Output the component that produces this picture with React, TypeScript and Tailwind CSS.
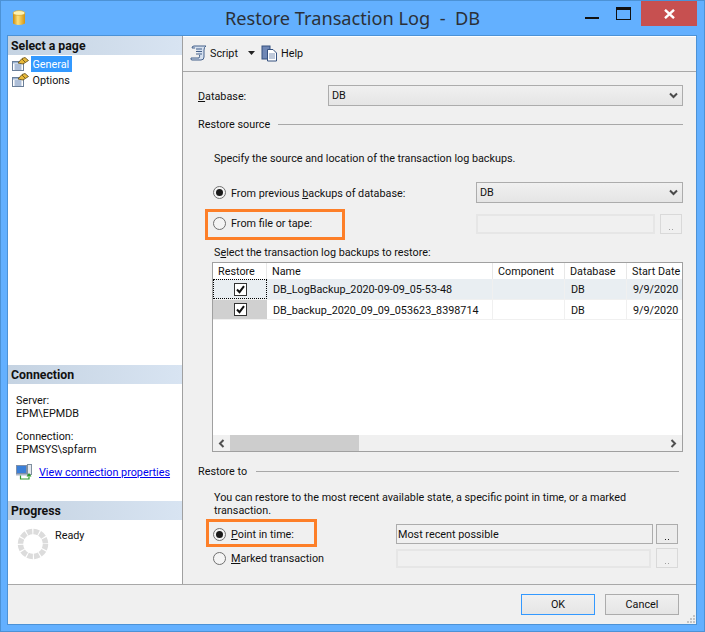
import React from "react";

function Radio({ on }: { on?: boolean }) {
  return (
    <span className="w-[13px] h-[13px] rounded-full border border-[#707070] bg-[#f4f4f4] flex items-center justify-center shrink-0">
      {on && <span className="w-[7px] h-[7px] rounded-full bg-[#1a1a1a]" />}
    </span>
  );
}

function Chevron() {
  return (
    <svg width="9" height="7" viewBox="0 0 9 7" className="shrink-0">
      <path d="M1 1.5 L4.5 5 L8 1.5" fill="none" stroke="#4a4a4a" strokeWidth="2" />
    </svg>
  );
}

function Select({ text, className }: { text: string; className: string }) {
  return (
    <div className={`h-[21px] border border-[#acacac] bg-gradient-to-b from-[#f0f0f0] to-[#e5e5e5] flex items-center justify-between pl-[3px] pr-[4px] shrink-0 ${className}`}>
      <span>{text}</span>
      <Chevron />
    </div>
  );
}

function Dots({ off }: { off?: boolean }) {
  return (
    <div className={`w-[22px] h-[20px] border flex items-end justify-center pb-[3px] gap-[2px] shrink-0 ${off ? "border-[#d9d9d9]" : "border-[#acacac] bg-[#ececec]"}`}>
      <span className={`w-[1px] h-[1px] ${off ? "bg-[#a0a0a0]" : "bg-[#222]"}`} />
      <span className={`w-[1px] h-[1px] ${off ? "bg-[#a0a0a0]" : "bg-[#222]"}`} />
    </div>
  );
}

function PageIcon() {
  return (
    <svg width="17" height="14" viewBox="0 0 17 14" className="shrink-0">
      <rect x="0.5" y="4.5" width="11" height="9" fill="#fff" stroke="#6b7f99" />
      <rect x="1" y="5" width="10" height="1.5" fill="#9db4d2" />
      <path d="M2.5 8h7M2.5 10h7M2.5 12h7" stroke="#5d7fb0" strokeWidth="1" />
      <path d="M6 6 L10 1.5 L13 0.5 L16.5 3.5 L11 7 Z" fill="#e8b93a" stroke="#5d4a1a" strokeWidth="0.8" />
      <path d="M10 2 L13 5" stroke="#5d4a1a" strokeWidth="0.8" />
    </svg>
  );
}

function PanelHead({ children }: { children: React.ReactNode }) {
  return (
    <div className="h-[19px] pl-[3px] pt-[1px] flex items-center font-bold text-[12.3px] bg-gradient-to-r from-[#c5d3e2] to-[#d8e4f2] text-[#111]">
      {children}
    </div>
  );
}

function Check({ bg, dotted }: { bg: string; dotted?: boolean }) {
  return (
    <div className={`w-[54px] h-full flex items-center justify-center shrink-0 ${bg} ${dotted ? "border border-dotted border-black" : ""}`}>
      <span className="w-[13px] h-[13px] border border-[#333] bg-white flex items-center justify-center">
        <svg width="9" height="9" viewBox="0 0 9 9">
          <path d="M1 4.5 L3.5 7.2 L8 1.2" fill="none" stroke="#111" strokeWidth="2" />
        </svg>
      </span>
    </div>
  );
}

function Row({ name, first }: { name: string; first?: boolean }) {
  const bg = first ? "bg-[#e9eef2] h-[21px]" : "bg-white h-[20px]";
  return (
    <div className={`flex border-b border-[#f0f0f0] shrink-0 ${bg}`}>
      <Check bg={first ? "bg-[#e9eef2]" : "bg-[#d0d0d0]"} dotted={first} />
      <div className="w-[226px] pl-[6px] pt-[1px] flex items-center border-r border-[#f0f0f0] shrink-0 whitespace-nowrap">{name}</div>
      <div className="w-[72px] border-r border-[#f0f0f0] shrink-0" />
      <div className="w-[62px] pl-[6px] pt-[1px] flex items-center border-r border-[#f0f0f0] shrink-0">DB</div>
      <div className="pl-[6px] pt-[1px] flex items-center whitespace-nowrap">9/9/2020</div>
    </div>
  );
}

function HeadCell({ w, children }: { w: string; children: React.ReactNode }) {
  return <div className={`${w} pl-[5px] flex items-center border-r border-[#e8e8e8] shrink-0`}>{children}</div>;
}

export default function App() {
  return (
    <div className="w-[705px] h-[632px] bg-[#63b0ff] border border-[#4c92d6] flex flex-col font-['Roboto',sans-serif] text-[10.8px] leading-[13px] text-[#111] overflow-hidden">
      {/* title bar */}
      <div className="h-[34px] relative flex items-center justify-center shrink-0">
        <svg width="14" height="16" viewBox="0 0 14 16" className="absolute left-[11px] top-[9px]">
          <defs>
            <linearGradient id="g" x1="0" x2="1" y1="0" y2="0">
              <stop offset="0" stopColor="#c98a10" />
              <stop offset="0.4" stopColor="#ffe27a" />
              <stop offset="1" stopColor="#d49412" />
            </linearGradient>
          </defs>
          <path d="M1 3 V13.5 Q7 16.5 13 13.5 V3 Z" fill="url(#g)" />
          <ellipse cx="7" cy="3" rx="6" ry="2.4" fill="#fff2b0" stroke="#d09a1c" strokeWidth="0.6" />
        </svg>
        <span className="font-['Noto_Sans',sans-serif] text-[18.2px] text-[#2b3038] whitespace-pre leading-[24px] -mt-[1px]">Restore Transaction Log  -  DB</span>
        <div className="absolute right-[105px] top-[16px] w-[14px] h-[2px] bg-[#111]" />
        <div className="absolute right-[73px] top-[6px] w-[15px] h-[13px] border border-[#111] border-t-[3px]" />
        <div className="absolute right-[7px] top-0 w-[56px] h-[25px] bg-[#c75050] flex items-center justify-center">
          <svg width="11" height="10" viewBox="0 0 11 10">
            <path d="M1 0.8 L10 9.2 M10 0.8 L1 9.2" stroke="#fff" strokeWidth="2.4" />
          </svg>
        </div>
      </div>

      {/* client */}
      <div className="ml-[6px] mr-[7px] w-[690px] h-[590px] border border-[#4c92d6] bg-[#f0f0f0] flex flex-col shrink-0">
        <div className="flex h-[549px] border-b border-[#a8a8a8] shrink-0">
          {/* left */}
          <div className="w-[175px] bg-white border-r border-[#a0a0a0] flex flex-col shrink-0">
            <PanelHead>Select a page</PanelHead>
            <div className="flex items-center h-[16px] mt-[1px] pl-[4px]">
              <PageIcon />
              <span className="ml-[2px] h-[16px] w-[41px] pl-[1.5px] pt-[1px] bg-[#3399ff] text-white flex items-center">General</span>
            </div>
            <div className="flex items-center h-[16px] pl-[4px]">
              <PageIcon />
              <span className="ml-[2px] pl-[1.5px] pt-[1px]">Options</span>
            </div>
            <div className="flex-1" />
            <PanelHead>Connection</PanelHead>
            <div className="pl-[8px] pt-[10px]">
              <div>Server:</div>
              <div>EPM\EPMDB</div>
              <div className="mt-[10px]">Connection:</div>
              <div>EPMSYS\spfarm</div>
              <div className="flex items-center mt-[8px] h-[16px]">
                <svg width="17" height="16" viewBox="0 0 17 16" className="shrink-0">
                  <rect x="0.5" y="1.5" width="10" height="8" fill="#3a7fd8" stroke="#7f8fa8" />
                  <rect x="0" y="10" width="11" height="1.5" fill="#aab6c6" />
                  <rect x="11.5" y="0.5" width="4" height="10" fill="#e4e8ee" stroke="#8090a0" />
                  <path d="M4.5 11.5 V15 H13 V10.5 M11 12.5 L13 10 L15 12.5" fill="none" stroke="#2f9a2f" strokeWidth="1.2" />
                </svg>
                <a className="ml-[6px] text-[#0000ee] underline whitespace-nowrap">View connection properties</a>
              </div>
            </div>
            <div className="h-[21px] shrink-0" />
            <PanelHead>Progress</PanelHead>
            <div className="h-[64px] flex pl-[9px] pt-[8px]">
              <svg width="32" height="32" viewBox="0 0 32 32" className="shrink-0">
                <circle cx="16" cy="16" r="12.5" fill="none" stroke="#dcdcdc" strokeWidth="5.5" strokeDasharray="5.4 1.15" />
              </svg>
              <span className="ml-[6px] mt-[1px]">Ready</span>
            </div>
          </div>

          {/* right */}
          <div className="flex-1 min-w-0 flex flex-col border-t border-white">
            <div className="h-[35px] border-b border-[#a8a8a8] flex items-center pl-[7px] pb-[2px] shrink-0">
              <svg width="18" height="18" viewBox="0 0 18 18" className="shrink-0">
                <path d="M4 2 H16 Q14 3 14 6 V13 Q14 16 11 16 H2 Q0.5 16 1 14 H9 Q10 12 9.5 11 M4 2 Q2 2 2 4 H5" fill="#d5e0ef" stroke="#45618a" strokeWidth="1" />
                <path d="M6 5h6M6 7.5h6M6 10h6" stroke="#45618a" />
              </svg>
              <span className="ml-[2px] w-[28px]">Script</span>
              <svg width="7" height="4" viewBox="0 0 7 4" className="ml-[10px]"><path d="M0 0 H7 L3.5 4 Z" fill="#222" /></svg>
              <svg width="17" height="17" viewBox="0 0 17 17" className="ml-[6px] shrink-0">
                <rect x="1" y="1" width="8" height="13" fill="#6f87b5" stroke="#34507f" />
                <path d="M6.5 4.5 H12 L15.5 8 V16 H6.5 Z" fill="#fff" stroke="#34507f" />
                <path d="M8 9h6M8 11h6M8 13h6" stroke="#7f93b5" />
              </svg>
              <span className="ml-[3px]">Help</span>
            </div>

            <div className="flex-1 pl-[15px] pr-[13px] pt-[13px]">
              <div className="flex items-center">
                <span className="w-[130px] pt-[1px]"><u>D</u>atabase:</span>
                <Select text="DB" className="w-[355px]" />
              </div>
              <div className="flex items-center h-[18px] mt-[9px]">
                <span className="w-[71px] whitespace-nowrap">Restore source</span>
                <div className="flex-1 h-[1px] bg-[#a8a8a8] ml-[9px]" />
              </div>
              <div className="ml-[16px] mt-[17px] h-[16px] flex items-center">Specify the source and location of the transaction log backups.</div>
              <div className="ml-[15px] mt-[16px] flex items-center h-[21px]">
                <Radio on />
                <span className="ml-[5px] w-[245px] pt-[1px]">From previous <u>b</u>ackups of database:</span>
                <Select text="DB" className="w-[207px]" />
              </div>
              <div className="ml-[15px] mt-[10px] flex items-center h-[21px] relative">
                <Radio />
                <span className="ml-[5px] w-[245px]">From f<u>i</u>le or tape:</span>
                <div className="w-[179px] h-[20px] border-2 border-[#e6e6e6] bg-[#f0f0f0] shrink-0" />
                <div className="ml-[5px]"><Dots off /></div>
                <div className="absolute -left-[8px] -top-[4px] w-[140px] h-[31px] border-[3px] border-[#fd7f28]" />
              </div>
              <div className="ml-[16px] mt-[10px] h-[16px] flex items-center">S<u>e</u>lect the transaction log backups to restore:</div>
              <div className="ml-[14px] mt-[2px] h-[190px] w-[471px] border border-[#a0a0a0] bg-white flex flex-col overflow-hidden">
                <div className="flex h-[16px] bg-white shrink-0">
                  <HeadCell w="w-[54px]">Restore</HeadCell>
                  <HeadCell w="w-[226px]">Name</HeadCell>
                  <HeadCell w="w-[72px]">Component</HeadCell>
                  <HeadCell w="w-[62px]">Database</HeadCell>
                  <div className="pl-[5px] flex items-center whitespace-nowrap">Start Date</div>
                </div>
                <Row name="DB_LogBackup_2020-09-09_05-53-48" first />
                <Row name="DB_backup_2020_09_09_053623_8398714" />
                <div className="flex-1" />
                <div className="h-[16px] bg-[#f0f0f0] flex items-center shrink-0">
                  <div className="w-[17px] flex justify-center shrink-0">
                    <svg width="7" height="9" viewBox="0 0 7 9"><path d="M5.5 1 L2 4.5 L5.5 8" fill="none" stroke="#505050" strokeWidth="2" /></svg>
                  </div>
                  <div className="w-[129px] h-full bg-[#cdcdcd] shrink-0" />
                  <div className="flex-1" />
                  <div className="w-[17px] flex justify-center shrink-0">
                    <svg width="7" height="9" viewBox="0 0 7 9"><path d="M1.5 1 L5 4.5 L1.5 8" fill="none" stroke="#505050" strokeWidth="2" /></svg>
                  </div>
                </div>
              </div>
              <div className="flex items-center h-[18px] mt-[10px] w-[481px]">
                <span className="w-[49px] whitespace-nowrap">Restore to</span>
                <div className="flex-1 h-[1px] bg-[#a8a8a8] ml-[9px]" />
              </div>
              <div className="ml-[16px] mt-[11px] w-[430px]">You can restore to the most recent available state, a specific point in time, or a marked transaction.</div>
              <div className="ml-[15px] mt-[7px] flex items-center h-[20px] relative">
                <Radio on />
                <span className="ml-[5px] w-[165px]"><u>P</u>oint in time:</span>
                <div className="w-[257px] h-[20px] border border-[#acacac] bg-[#f0f0f0] flex items-center pl-[1px] shrink-0">Most recent possible</div>
                <div className="ml-[3px]"><Dots /></div>
                <div className="absolute -left-[7px] -top-[5px] w-[111px] h-[28px] border-[3px] border-[#fd7f28]" />
              </div>
              <div className="ml-[15px] mt-[4px] flex items-center h-[20px]">
                <Radio />
                <span className="ml-[5px] w-[165px]"><u>M</u>arked transaction</span>
                <div className="w-[255px] h-[19px] border-2 border-[#e6e6e6] bg-[#f0f0f0] shrink-0" />
                <div className="ml-[5px]"><Dots off /></div>
              </div>
            </div>
          </div>
        </div>

        {/* buttons */}
        <div className="flex-1 flex justify-end items-start gap-[10px] pr-[17px] pt-[9px] relative">
          <div className="w-[74px] h-[21px] border border-[#3399ff] bg-gradient-to-b from-[#f0f0f0] to-[#e5e5e5] flex items-center justify-center">OK</div>
          <div className="w-[74px] h-[21px] border border-[#acacac] bg-gradient-to-b from-[#f0f0f0] to-[#e5e5e5] flex items-center justify-center">Cancel</div>
          <svg width="9" height="9" viewBox="0 0 9 9" className="absolute right-[1px] bottom-[1px]">
            <path d="M7 1h2v2H7zM4 4h2v2H4zM7 4h2v2H7zM1 7h2v2H1zM4 7h2v2H4zM7 7h2v2H7z" fill="#c4c4c4" />
          </svg>
        </div>
      </div>
    </div>
  );
}
